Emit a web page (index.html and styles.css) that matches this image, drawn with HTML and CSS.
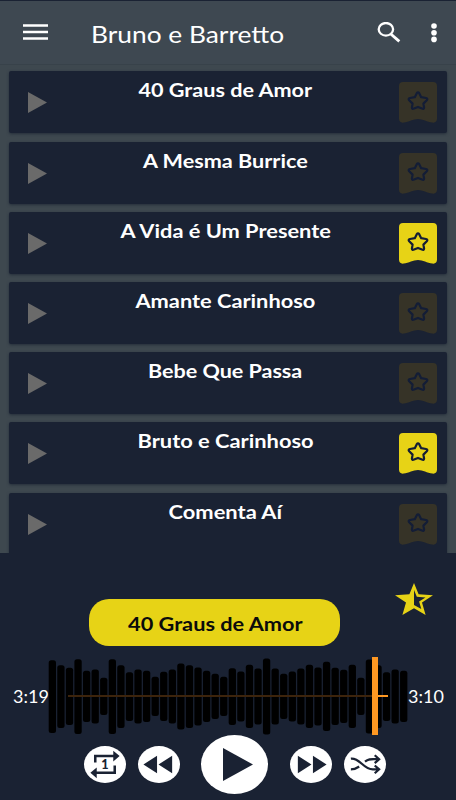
FILE: index.html
```
<!DOCTYPE html>
<html lang="pt"><head><meta charset="utf-8"><title>Bruno e Barretto</title><link rel="stylesheet" href="styles.css"></head>
<body>
<svg class="defs" aria-hidden="true"><symbol id="badge" viewBox="0 0 38 41"><path d="M4 0H34Q38 0 38 4V36.5Q38 41 33.5 40.6C28 40 24 37 19 37C14 37 10 40 4.5 40.6Q0 41 0 36.5V4Q0 0 4 0Z" class="flag"/><path d="M17.8 11.2Q19 9.4 20.2 11.2L22.2 15.2L27 16Q29.2 16.6 27.8 18.2L24.4 21.6L25.1 25.5Q25 27.6 23 26.6L19 24.9L15 26.6Q13 27.6 12.9 25.5L13.6 21.6L10.2 18.2Q8.8 16.6 11 16L15.8 15.2Z" fill="none" stroke="#131d36" stroke-width="2.2" stroke-linejoin="round"/></symbol></svg>
<header class="bar">
<svg class="menu" viewBox="0 0 25 16"><path d="M0 1.5H25M0 8H25M0 14.5H25" stroke="#fff" stroke-width="2.3"/></svg>
<h1><span>Bruno e Barretto</span></h1>
<svg class="search" viewBox="0 0 24 21"><ellipse cx="8.9" cy="7.3" rx="7.2" ry="6.3" fill="none" stroke="#fff" stroke-width="2.3"/><path d="M13.8 12L22.3 19.3" stroke="#fff" stroke-width="2.9"/></svg>
<svg class="more" viewBox="0 0 6 20"><circle cx="3" cy="3" r="2.8"/><circle cx="3" cy="9.7" r="2.8"/><circle cx="3" cy="16.4" r="2.8"/></svg>
</header>
<main class="list"></main>
<section class="player">
<svg class="rating" viewBox="0 0 38 32"><path fill-rule="evenodd" d="M19 0L23.6 11.3L38 12.2L27 19.6L30.6 32L19 25.2L7.4 32L11 19.6L0 12.2L14.4 11.3ZM19 7V22.1L26.3 26L24.1 18.6L30.5 14.4L21.8 13.8Z" fill="#e7d316"/></svg>
<div class="now"><span>40 Graus de Amor</span></div>
<div class="track"><time><span>3:19</span></time><div class="wave"><svg class="bars" viewBox="0 0 360 79"></svg><i class="line"></i><i class="rest"></i><i class="cursor"></i></div><time><span>3:10</span></time></div>
<div class="controls">
<button><svg viewBox="0 0 42 38"><path d="M11 17V10.3H31M31 20V27.5H11" fill="none" stroke="#1a2233" stroke-width="2.6"/><path d="M29.5 4.8L36 10.3L29.5 15.8ZM12.5 22L6 27.5L12.5 33Z" fill="#1a2233"/><text x="20.8" y="23.3" text-anchor="middle">1</text></svg></button>
<button><svg viewBox="0 0 42 38"><path d="M19 10V28L5 19ZM34.5 10V28L20.5 19Z" fill="#1a2233"/></svg></button>
<button class="play"><svg viewBox="0 0 67 59"><path d="M22 13V46L52 29.5Z" fill="#1a2233"/></svg></button>
<button><svg viewBox="0 0 42 38"><path d="M7.5 10V28L21.5 19ZM23 10V28L37 19Z" fill="#1a2233"/></svg></button>
<button><svg viewBox="0 0 42 38"><path d="M6.5 13C16 12 19 24 29 24H35M6.5 24C11 24 12 23 15 21M21 16C25 12.5 28 13.5 35 13.5M31 9.5L35.5 13.5L31 17.5M31 20L35.5 24L31 28" fill="none" stroke="#1a2233" stroke-width="2.3"/></svg></button>
</div>
</section>
<script src="app.js"></script>
</body></html>
```
FILE: styles.css
```
*{box-sizing:border-box}
body{margin:0;width:456px;height:800px;overflow:hidden;background:#3e484f;font-family:Lato,sans-serif;color:#fff;display:flex;flex-direction:column}
.defs{position:absolute;width:0;height:0}
span{display:inline-block;white-space:nowrap}
svg{display:block;flex:none}
.bar{height:65px;flex:none;display:flex;align-items:center;border-top:1px solid #1a2233;border-bottom:1px solid #38424a;background:#3e4851;padding:0 19px 0 23px}
.menu{width:25px;height:16px;margin-top:-1px}
h1{margin:1px 0 0 43px;width:286px;font-size:24px;font-weight:400}
h1 span{transform-origin:left}
.search{width:24px;height:21px;margin-top:-1px}
.more{width:6px;height:20px;margin-left:30px;fill:#fff}
.list{height:488px;flex:none;overflow:hidden;padding:6.4px 9px 0;display:flex;flex-direction:column;gap:8.2px}
.card{height:62px;flex:none;display:flex;background:#1a2233;border-radius:2px;box-shadow:0 1px 3px #242e3a;padding:11px 10px 0 19px}
.card .start{width:19px;height:21px;margin-top:10px}
.card h2{margin:-2px -2px 0 3px;flex:1;text-align:center;font-size:19px;line-height:20px;font-weight:700}
.badge{width:38px;height:41px;--flag:#363327}
.badge.on{--flag:#e7d316}
.flag{fill:var(--flag)}
.player{height:247px;flex:none;background:#1a2233;position:relative}
.rating{position:absolute;left:395px;top:30px;width:38px;height:32px}
.now{left:89px;width:251px;height:47px;border-radius:20px;background:#e7d316;color:#0b0b0b;font-weight:700;font-size:19px;display:flex;align-items:center;justify-content:center;position:absolute;top:46px;padding:2px 0 0 1px}
.track{padding-top:104px;display:grid;grid-template-columns:48px 360px 48px;align-items:center}
time{font-size:17px;text-align:right}
time:last-child{text-align:left;padding-left:1px}
.wave{height:78px;position:relative}
.bars{width:360px;height:79px}
.line,.rest,.cursor{position:absolute}
.line{left:20px;right:36px;top:38px;height:2px;background:#3d240c}
.rest{left:330px;width:10px;top:38px;height:2px;background:#ff9822}
.cursor{left:324px;width:6px;top:0;height:78px;background:#ff9822}
.controls{display:flex;align-items:center;padding:0 44px 0 84px;height:59px;justify-content:flex-start}
button{width:42px;height:37px;flex:none;border:0;border-radius:50%;padding:0;background:#fff;margin-right:11.5px}
button svg{width:100%;height:100%}
button text{font:900 13px Lato,sans-serif;fill:#1a2233}
.play{width:67px;height:59px;margin:0 22px 0 10px}
```
FILE: app.js
```
const songs = [["40 Graus de Amor",0,174],["A Mesma Burrice",0,165],["A Vida é Um Presente",1,210],["Amante Carinhoso",0,180],["Bebe Que Passa",0,154],["Bruto e Carinhoso",1,176],["Comenta Aí",0,114]];
document.querySelector('.list').innerHTML = songs.map(([title, on, width]) => `<article class="card"><svg class="start" viewBox="0 0 19 21"><path d="M0 0V21L19 10.5Z" fill="#6a6a6a"/></svg><h2><span data-width="${width}">${title}</span></h2><svg class="badge ${on ? 'on' : ''}"><use href="#badge"/></svg></article>`).join('');
const tops = [61,76,84,58,93,89,114,58,76,97,89,93,111,96,89,71,76,83,93,102,111,85,95,75,86,56,86,102,95,86,75,83,66,84,90,75,114,59,76,97,89,93];
document.querySelector('.bars').innerHTML = tops.map((t, i) => { const h = (170 - t) * 2 / 3; return `<rect x="${(0.7 + i * 8.57).toFixed(2)}" y="${(39.5 - h / 2).toFixed(1)}" width="7.3" height="${h.toFixed(1)}" rx="2.5"/>`; }).join('');
const fit = (el, width) => { el.style.transform = `scaleX(${width / el.offsetWidth})`; };
document.querySelectorAll('[data-width]').forEach(el => fit(el, el.dataset.width));
fit(document.querySelector('.now span'), 175);
fit(document.querySelector('h1 span'), 193);
document.querySelectorAll('time span').forEach(el => fit(el, 36));
```
